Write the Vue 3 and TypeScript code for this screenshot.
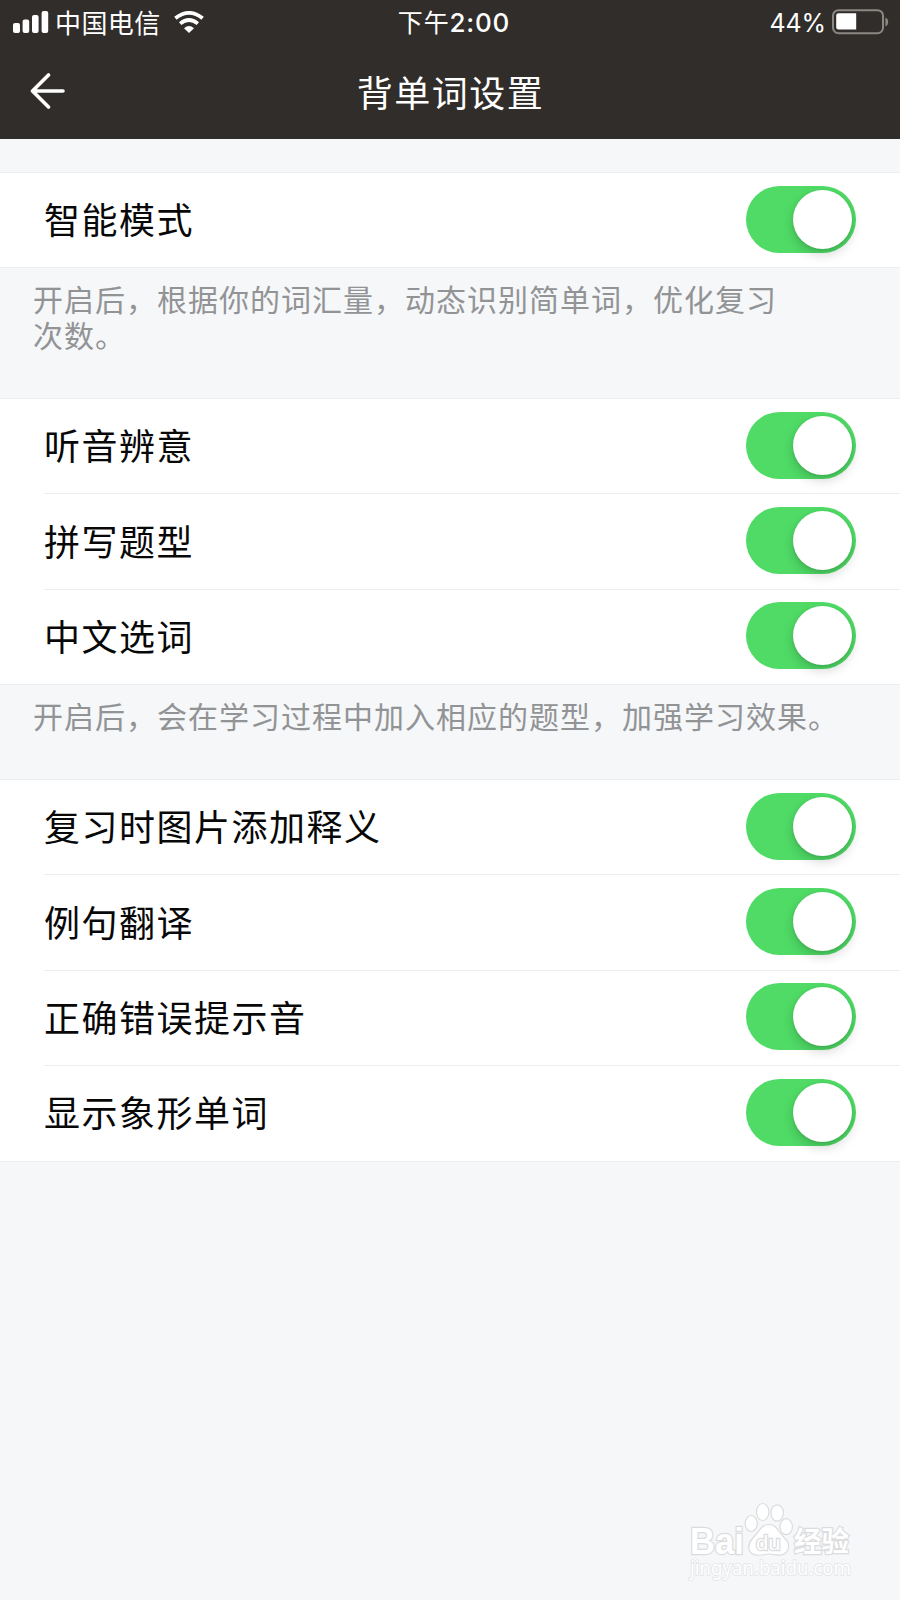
<script setup lang="ts">
import { reactive } from 'vue'

interface Setting {
  label: string
  on: boolean
}

interface Group {
  id: string
  items: Setting[]
  note?: string
}

const groups = reactive<Group[]>([
  {
    id: 'smart',
    items: [{ label: '智能模式', on: true }],
    note: '开启后，根据你的词汇量，动态识别简单词，优化复习次数。',
  },
  {
    id: 'types',
    items: [
      { label: '听音辨意', on: true },
      { label: '拼写题型', on: true },
      { label: '中文选词', on: true },
    ],
    note: '开启后，会在学习过程中加入相应的题型，加强学习效果。',
  },
  {
    id: 'display',
    items: [
      { label: '复习时图片添加释义', on: true },
      { label: '例句翻译', on: true },
      { label: '正确错误提示音', on: true },
      { label: '显示象形单词', on: true },
    ],
  },
])
</script>

<template>
  <div class="screen">
    <header class="top">
      <div class="status">
        <div class="carrier">
          <svg class="signal" width="36" height="22" viewBox="0 0 36 22" fill="#fff">
            <rect x="0" y="12" width="7" height="10" rx="2" />
            <rect x="9.6" y="8.5" width="6.6" height="13.5" rx="2" />
            <rect x="19" y="4" width="6.6" height="18" rx="2" />
            <rect x="28.6" y="0" width="6.6" height="22" rx="2" />
          </svg>
          <span class="carrier-name">中国电信</span>
          <svg class="wifi" width="30" height="22" viewBox="0 0 30 22" fill="none" stroke="#fff" stroke-width="3.8">
            <path d="M1.4 7.3Q15-3.5 28.6 7.3" />
            <path d="M6.2 12.6Q15 5.4 23.8 12.6" />
            <path d="M10 17.2Q15 13 20 17.2L15 22Z" fill="#fff" stroke="none" />
          </svg>
        </div>
        <span class="time">下午<b>2:00</b></span>
        <div class="power">
          <span class="percent">44%</span>
          <svg width="57" height="26" viewBox="0 0 57 26">
            <rect x="1" y="1.2" width="50" height="23" rx="5.5" fill="none" stroke="#8b8884" stroke-width="2" />
            <path d="M6.5 4.2H24.2V20.6H6.5Q4.2 20.6 4.2 18.3V6.5Q4.2 4.2 6.5 4.2Z" fill="#fff" />
            <path d="M53.4 8.5Q56.2 9.8 56.2 13T53.4 17.5Z" fill="#8b8884" />
          </svg>
        </div>
      </div>
      <div class="nav">
        <button class="back" type="button" aria-label="返回">
          <svg width="36" height="36" viewBox="0 0 36 36" fill="none" stroke="#fff" stroke-width="3.6" stroke-linecap="round" stroke-linejoin="round">
            <path d="M18.5 2L2.5 18L18.5 34M3 18H33" />
          </svg>
        </button>
        <h1>背单词设置</h1>
      </div>
    </header>

    <main>
      <section v-for="group in groups" :key="group.id" :class="['group', group.id]">
        <ul class="card">
          <li v-for="item in group.items" :key="item.label">
            <span>{{ item.label }}</span>
            <button
              type="button"
              role="switch"
              :aria-checked="item.on"
              :aria-label="item.label"
              :class="['toggle', { on: item.on }]"
              @click="item.on = !item.on"
            >
              <i />
            </button>
          </li>
        </ul>
        <p v-if="group.note">{{ group.note }}</p>
      </section>
    </main>

    <svg class="mark" width="190" height="96" viewBox="0 0 190 96">
      <g fill="#fff" stroke="#dadcde" stroke-width="1.2">
        <g paint-order="stroke" stroke-width="2.4" font-weight="700">
          <text x="10" y="53.5" font-size="36" textLength="54" lengthAdjust="spacingAndGlyphs">Bai</text>
          <text x="114" y="51.5" font-size="28" textLength="55" lengthAdjust="spacingAndGlyphs">经验</text>
        </g>
        <ellipse cx="71.2" cy="23.5" rx="6" ry="8" />
        <ellipse cx="82.7" cy="12" rx="6.2" ry="8.5" />
        <ellipse cx="97.2" cy="13" rx="6.2" ry="8.2" />
        <ellipse cx="106.2" cy="26.7" rx="6.2" ry="8" />
        <path d="M89 24.5C97 24.5 98.5 32 104 37.5C110 43 109.5 49 106 52.5C101 57.5 95 54 89 54C83 54 78 57.5 72 53.5C67 50 68 43 73 38C79 32 81 24.5 89 24.5Z" />
        <text x="76" y="49.5" font-size="21" textLength="24.5" lengthAdjust="spacingAndGlyphs" stroke-width="2.4" paint-order="stroke">du</text>
      </g>
      <text class="mark-url" x="10" y="75" font-size="19.5" textLength="161" lengthAdjust="spacingAndGlyphs" fill="#fff" stroke="#e3e5e7" stroke-width="1.6" paint-order="stroke">jingyan.baidu.com</text>
    </svg>
  </div>
</template>

<style>
body {
  margin: 0;
  background: #f5f7f9;
}
</style>

<style scoped>
.screen {
  position: relative;
  width: 900px;
  height: 1600px;
  overflow: hidden;
  background: #f5f7f9;
  color: #080808;
  font-family: "Noto Sans CJK SC", sans-serif;
}

.top {
  height: 139px;
  background: #312d2a;
  color: #fff;
}

.status {
  display: grid;
  grid-template-columns: 1fr auto 1fr;
  align-items: center;
  height: 44px;
  padding: 0 11px 0 13px;
}

.carrier {
  display: flex;
  align-items: center;
}

.carrier-name {
  margin-left: 6px;
  font-size: 26px;
  line-height: 43px;
  height: 44px;
  letter-spacing: 0.4px;
}

.wifi {
  margin-left: 13px;
}

.time {
  padding-left: 6px;
  font-size: 25px;
  line-height: 43px;
  height: 44px;
  letter-spacing: 0.8px;
}

.time b {
  font-family: Inter, sans-serif;
  font-size: 26px;
  font-weight: 500;
}

.power {
  display: flex;
  align-items: center;
  justify-content: flex-end;
  gap: 6px;
}

.percent {
  padding-top: 1px;
  font-family: Inter, sans-serif;
  font-size: 25px;
  letter-spacing: -0.1px;
}

.nav {
  display: grid;
  grid-template-columns: 96px 1fr 96px;
  align-items: center;
  height: 94px;
}

.back {
  display: flex;
  margin: 0 0 0 30px;
  padding: 0;
  border: 0;
  background: none;
}

h1 {
  margin: 0;
  font-size: 36px;
  line-height: 54px;
  font-weight: 400;
  letter-spacing: 1.5px;
  text-indent: 1px;
  text-align: center;
}

main {
  padding-top: 33px;
}

.card {
  margin: 0;
  padding: 0 0 0 44px;
  border: solid #eceef0;
  border-width: 1px 0;
  background: #fff;
  list-style: none;
}

li {
  box-sizing: border-box;
  display: flex;
  align-items: center;
  justify-content: space-between;
  height: 95.4px;
  padding: 0 44px 2px 0;
  font-size: 36px;
  letter-spacing: 1.5px;
}

li span {
  padding-bottom: 2px;
}

li + li {
  border-top: 1px solid #eceef0;
}

.card li:first-child {
  height: 94.4px;
}

.smart {
  height: 226px;
}

.types {
  height: 381px;
}

p {
  margin: 12px 120px 0 33px;
  color: #929395;
  font-size: 30px;
  line-height: 36px;
  letter-spacing: 1px;
}

.types p {
  margin-right: 40px;
}

.toggle {
  box-sizing: border-box;
  display: flex;
  align-items: center;
  width: 110px;
  height: 67px;
  padding: 0 4px;
  border: 0;
  border-radius: 34px;
  background: #e4e4e6;
}

.toggle.on {
  justify-content: flex-end;
  background: #4fdb66;
}

.toggle i {
  width: 59px;
  height: 59px;
  border-radius: 50%;
  background: #fff;
  box-shadow: 0 5px 12px rgba(0, 0, 0, 0.18), 0 1px 3px rgba(0, 0, 0, 0.1);
}

.mark {
  position: absolute;
  left: 680px;
  top: 1500px;
  overflow: visible;
  font-family: "Liberation Sans", "Noto Sans CJK SC", sans-serif;
}

.mark-url {
  font-family: "Noto Sans", sans-serif;
}
</style>
